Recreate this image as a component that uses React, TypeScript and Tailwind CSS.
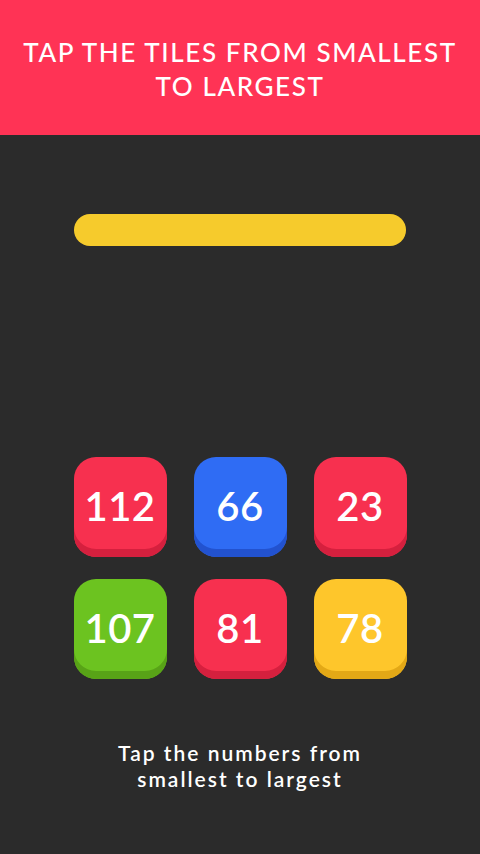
import React from "react";

const tiles = [
  { n: "112", bg: "bg-[#f7304f]", sh: "shadow-[inset_0_-8px_0_#d5203e]" },
  { n: "66", bg: "bg-[#2f6cf4]", sh: "shadow-[inset_0_-8px_0_#2252cf]" },
  { n: "23", bg: "bg-[#f7304f]", sh: "shadow-[inset_0_-8px_0_#d5203e]" },
  { n: "107", bg: "bg-[#6cc320]", sh: "shadow-[inset_0_-8px_0_#58a317]" },
  { n: "81", bg: "bg-[#f7304f]", sh: "shadow-[inset_0_-8px_0_#d5203e]" },
  { n: "78", bg: "bg-[#fec62b]", sh: "shadow-[inset_0_-8px_0_#e3a816]" },
];

export default function App() {
  return (
    <div
      className="w-[480px] h-[854px] bg-[#2b2b2b] flex flex-col items-center overflow-hidden"
      style={{ fontFamily: "Lato, 'Open Sans', sans-serif" }}
    >
      <div className="w-full h-[135px] bg-[#ff3355] flex items-center justify-center shrink-0">
        <p className="text-white text-[26px] leading-[34px] tracking-[1.6px] text-center font-medium pt-[2px]">
          TAP THE TILES FROM SMALLEST
          <br />
          TO LARGEST
        </p>
      </div>
      <div className="mt-[79px] w-[332px] h-[32px] rounded-full bg-[#f6cb2c] shrink-0" />
      <div className="mt-[211px] grid grid-cols-3 gap-x-[27px] gap-y-[22px]">
        {tiles.map((t, i) => (
          <div
            key={i}
            className={`w-[93px] h-[100px] rounded-[22px] ${t.bg} ${t.sh} flex items-center justify-center pb-[2px]`}
          >
            <span className="text-white text-[40px] tracking-[0.5px] font-semibold">{t.n}</span>
          </div>
        ))}
      </div>
      <p className="mt-[61px] text-white text-[21px] leading-[26px] tracking-[2px] text-center font-semibold">
        Tap the numbers from
        <br />
        smallest to largest
      </p>
    </div>
  );
}
